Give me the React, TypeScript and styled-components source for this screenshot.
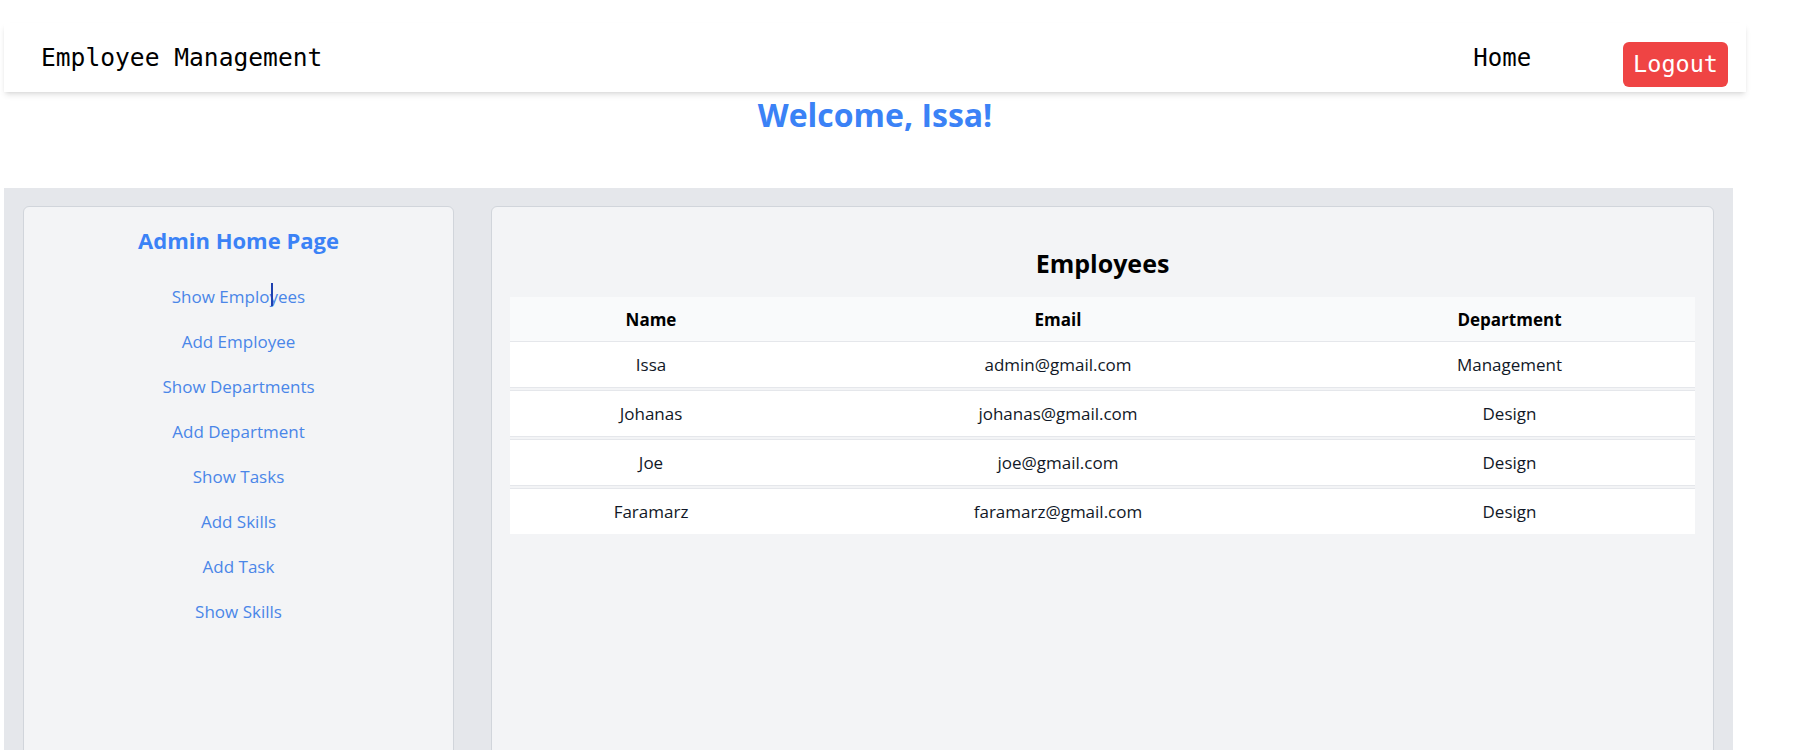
import React from 'react';
import styled, { createGlobalStyle } from 'styled-components';

const GlobalStyle = createGlobalStyle`
  body {
    margin: 0;
    background: #fff;
    font-family: "Open Sans", Roboto, sans-serif;
    color: #000;
  }
`;

const Page = styled.div`
  display: flex;
  flex-direction: column;
  padding: 23px 0 0 4px;
  width: 1742px;
`;

const NavBar = styled.nav`
  display: flex;
  align-items: center;
  height: 69px;
  padding: 0 18px 0 37px;
  background: #fff;
  box-shadow: 0 4px 6px -1px rgba(0, 0, 0, 0.1), 0 2px 4px -2px rgba(0, 0, 0, 0.1);
  font-family: "DejaVu Sans Mono", Consolas, monospace;
  font-size: 24px;
`;

const Brand = styled.div`
  margin-right: auto;
  font-size: 24.6px;
`;

const NavLink = styled.a`
  color: #000;
  text-decoration: none;
  cursor: pointer;
`;

const LogoutButton = styled.button`
  margin: 14px 0 0 92px;
  padding: 8px 10px;
  border: none;
  border-radius: 6px;
  background: #ef4444;
  color: #fff;
  font-family: inherit;
  font-size: 23.5px;
  line-height: 29px;
  cursor: pointer;
`;

const Welcome = styled.h1`
  margin: 3px 0 0;
  text-align: center;
  font-size: 32px;
  line-height: 40px;
  font-weight: 700;
  color: #3b82f6;
`;

const Main = styled.main`
  display: flex;
  gap: 37px;
  margin-top: 53px;
  width: 1729px;
  box-sizing: border-box;
  padding: 18px 19px;
  background: #e5e7eb;
`;

const Card = styled.section<{ width: number }>`
  width: ${({ width }) => width}px;
  min-height: 600px;
  box-sizing: border-box;
  display: flex;
  flex-direction: column;
  align-items: center;
  background: #f3f4f6;
  border: 1px solid #d1d5db;
  border-radius: 6px;
  padding: 18px;
`;

const SideTitle = styled.h2`
  margin: 0;
  font-size: 22px;
  line-height: 30px;
  font-weight: 700;
  color: #3b82f6;
`;

const SideMenu = styled.div`
  display: flex;
  flex-direction: column;
  align-items: center;
  gap: 18px;
  margin-top: 28px;
`;

const SideLink = styled.a`
  position: relative;
  font-size: 17px;
  line-height: 27px;
  color: #4a86e8;
  text-decoration: none;
  cursor: pointer;
`;

const Caret = styled.span`
  position: absolute;
  left: 74%;
  top: 0;
  width: 2px;
  height: 23px;
  background: #1e40af;
`;

const SectionTitle = styled.h2`
  margin: 21px 0 17px;
  font-size: 25px;
  line-height: 34px;
  font-weight: 700;
`;

const Table = styled.table`
  width: 100%;
  table-layout: fixed;
  border-collapse: separate;
  border-spacing: 0;
  font-size: 17px;
  text-align: center;
`;

const HeadCell = styled.th`
  height: 44px;
  padding: 0;
  background: #f9fafb;
  border-bottom: 1px solid #e5e7eb;
  font-weight: 700;
`;

const Row = styled.tr`
  &:not(:last-child) td {
    border-bottom: 4px double #e5e7eb;
  }
`;

const Cell = styled.td`
  height: 45px;
  padding: 0;
  background: #fff;
  background-clip: padding-box;
  color: #111827;
`;

const menu = [
  'Show Employees',
  'Add Employee',
  'Show Departments',
  'Add Department',
  'Show Tasks',
  'Add Skills',
  'Add Task',
  'Show Skills',
];

const employees = [
  { name: 'Issa', email: 'admin@gmail.com', department: 'Management' },
  { name: 'Johanas', email: 'johanas@gmail.com', department: 'Design' },
  { name: 'Joe', email: 'joe@gmail.com', department: 'Design' },
  { name: 'Faramarz', email: 'faramarz@gmail.com', department: 'Design' },
];

const App: React.FC = () => {
  return (
    <>
      <GlobalStyle />
      <Page>
        <NavBar>
          <Brand>Employee Management</Brand>
          <NavLink>Home</NavLink>
          <LogoutButton>Logout</LogoutButton>
        </NavBar>
        <Welcome>Welcome, Issa!</Welcome>
        <Main>
          <Card width={431}>
            <SideTitle>Admin Home Page</SideTitle>
            <SideMenu>
              {menu.map((item, i) => (
                <SideLink key={item}>
                  {item}
                  {i === 0 && <Caret />}
                </SideLink>
              ))}
            </SideMenu>
          </Card>
          <Card width={1223}>
            <SectionTitle>Employees</SectionTitle>
            <Table>
              <colgroup>
                <col style={{ width: 282 }} />
                <col style={{ width: 532 }} />
                <col />
              </colgroup>
              <thead>
                <tr>
                  <HeadCell>Name</HeadCell>
                  <HeadCell>Email</HeadCell>
                  <HeadCell>Department</HeadCell>
                </tr>
              </thead>
              <tbody>
                {employees.map((e) => (
                  <Row key={e.email}>
                    <Cell>{e.name}</Cell>
                    <Cell>{e.email}</Cell>
                    <Cell>{e.department}</Cell>
                  </Row>
                ))}
              </tbody>
            </Table>
          </Card>
        </Main>
      </Page>
    </>
  );
};

export default App;
